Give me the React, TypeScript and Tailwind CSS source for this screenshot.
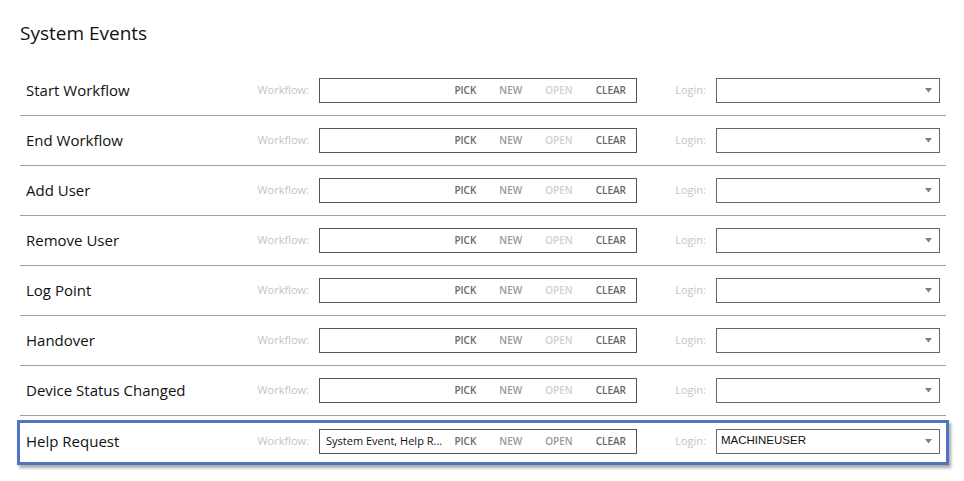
import React from "react";

const rows = [
  "Start Workflow",
  "End Workflow",
  "Add User",
  "Remove User",
  "Log Point",
  "Handover",
  "Device Status Changed",
];

function Caret() {
  return (
    <svg width="7" height="5" viewBox="0 0 7 5" className="shrink-0">
      <path d="M0 0H7L3.5 4.5Z" fill="#808080" />
    </svg>
  );
}

function RowContent({ label, workflow, login }: { label: string; workflow?: string; login?: string }) {
  const active = !!workflow;
  return (
    <>
      <div className="w-[235px] shrink-0 pl-[6px] text-[15px] text-[#111]">{label}</div>
      <div className="w-[54px] shrink-0 text-right text-[11px] text-[#c4c4c4]">Workflow:</div>
      <div className="ml-[10px] flex h-[25px] w-[318px] shrink-0 items-center border border-[#555] pl-[6px] pr-[10px]">
        <div className="flex-1 truncate text-[11px] text-[#111]">{workflow ?? ""}</div>
        <div className="flex items-center gap-[23px] text-[10px] font-semibold">
          <span className="text-[#666]">PICK</span>
          <span className="text-[#999]">NEW</span>
          <span className={active ? "text-[#999]" : "text-[#d0d0d0]"}>OPEN</span>
          <span className="text-[#666]">CLEAR</span>
        </div>
      </div>
      <div className="w-[69px] shrink-0 text-right text-[11px] text-[#c4c4c4]">Login:</div>
      <div className="ml-[10px] flex h-[25px] w-[224px] shrink-0 items-center border border-[#666] pl-[4px] pr-[7px]">
        <div className="flex-1 text-[11.5px] text-[#111] [font-family:'Liberation_Sans',Arial,sans-serif]">{login ?? ""}</div>
        <Caret />
      </div>
    </>
  );
}

export default function App() {
  return (
    <div className="h-[481px] w-[964px] bg-white [font-family:'Open_Sans',sans-serif]">
      <div className="px-[20px] pt-[19px]">
        <h1 className="text-[19px] leading-[28px] text-[#111]">System Events</h1>
        <div className="mt-[19px] w-[926px]">
          {rows.map((r) => (
            <div key={r} className="flex h-[50px] items-center border-b border-[#a0a0a0]">
              <RowContent label={r} />
            </div>
          ))}
          <div className="-mx-[3px] mt-[4px] flex h-[45px] items-center border-[3px] border-[#4e75bf] pb-[3px] shadow-[2px_3px_3px_rgba(0,0,0,0.35)]">
            <RowContent label="Help Request" workflow="System Event, Help R..." login="MACHINEUSER" />
          </div>
        </div>
      </div>
    </div>
  );
}
